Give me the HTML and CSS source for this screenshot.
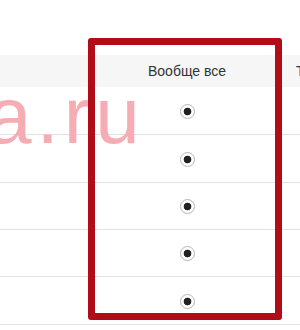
FILE: index.html
```html
<!DOCTYPE html>
<html lang="ru">
<head>
    <meta charset="UTF-8">
    <title>Права доступа</title>
    <link rel="stylesheet" href="styles.css">
</head>
<body>

<div class="page">
    <table class="access-table">
        <thead>
            <tr>
                <th class="col-name"></th>
                <th class="col-all">Вообще все</th>
                <th class="col-next">Т</th>
            </tr>
        </thead>
        <tbody>
            <tr><td></td><td class="col-all"><span class="radio"></span></td><td></td></tr>
            <tr><td></td><td class="col-all"><span class="radio"></span></td><td></td></tr>
            <tr class="row-short"><td></td><td class="col-all"><span class="radio"></span></td><td></td></tr>
            <tr class="row-short"><td></td><td class="col-all"><span class="radio"></span></td><td></td></tr>
            <tr><td></td><td class="col-all"><span class="radio"></span></td><td></td></tr>
        </tbody>
    </table>

    <!-- watermark and highlight frame lie over the table -->
    <div class="watermark">a.ru</div>
    <div class="highlight"></div>
</div>

</body>
</html>
```

FILE: styles.css
```css
body {
    margin: 0;
    background: #fff;
    font-family: "Liberation Sans", Arial, sans-serif;
    overflow: hidden;
}
.page {
    position: relative;
    width: 300px;
    height: 330px;
    padding-top: 55px;
    box-sizing: border-box;
    overflow: hidden;
}
.access-table {
    width: 330px;
    border-collapse: collapse;
    table-layout: fixed;
}
.access-table th {
    height: 32px;
    padding: 0;
    background-color: #f6f6f6;
    font-size: 14px;
    font-weight: normal;
    color: #333;
    text-align: center;
}
.access-table td {
    height: 47px;
    padding: 0;
    border-bottom: 1px solid #e2e2e2;
    text-align: center;
}
.access-table .row-short td {
    height: 46px;
}
.col-name {
    width: 93px;
}
.col-all {
    width: 188px;
}
.access-table th.col-next {
    text-align: left;
    padding-left: 15px;
}
.radio {
    display: inline-block;
    width: 13px;
    height: 13px;
    border: 1px solid #b5b5b5;
    border-radius: 50%;
    background: radial-gradient(circle, #222 0 3.5px, #fff 4.2px);
    vertical-align: middle;
}
.watermark {
    position: absolute;
    left: -13px;
    top: 70px;
    font-size: 80px;
    color: #f6acb3;
    letter-spacing: 5px;
}
.highlight {
    position: absolute;
    left: 88px;
    top: 38px;
    width: 194px;
    height: 282px;
    box-sizing: border-box;
    border: 7px solid #b10d19;
    border-radius: 3px;
}
```
